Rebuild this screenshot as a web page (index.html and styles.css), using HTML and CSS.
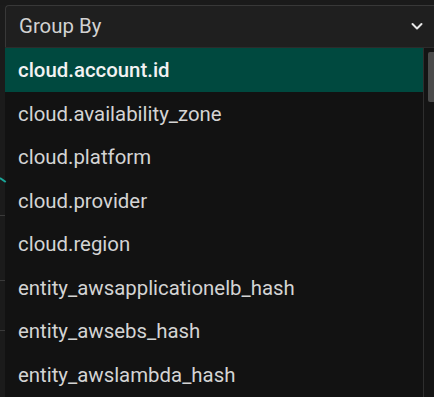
FILE: index.html
```html
<!DOCTYPE html>
<html lang="en">
<head>
<meta charset="UTF-8">
<title>Group By</title>
<link rel="stylesheet" href="styles.css">
</head>
<body>
  <div class="backdrop">
    <div class="chart-edge">
      <span class="grid-line"></span>
      <span class="trend"></span>
      <span class="grid-line"></span>
      <span class="grid-line"></span>
    </div>
    <div class="select-panel">
      <div class="select-box">
        <span class="select-label">Group By</span>
        <svg class="chevron" width="14" height="14" viewBox="0 0 14 14">
          <path d="M2.5 5 L7 9.5 L11.5 5" fill="none" stroke="#e6e6e6" stroke-width="2" stroke-linecap="round" stroke-linejoin="round"/>
        </svg>
      </div>
      <div class="menu">
        <ul class="options">
          <li class="option active">cloud.account.id</li>
          <li class="option">cloud.availability_zone</li>
          <li class="option">cloud.platform</li>
          <li class="option">cloud.provider</li>
          <li class="option">cloud.region</li>
          <li class="option">entity_awsapplicationelb_hash</li>
          <li class="option">entity_awsebs_hash</li>
          <li class="option">entity_awslambda_hash</li>
        </ul>
        <div class="scroll-track">
          <div class="scroll-thumb"></div>
        </div>
      </div>
    </div>
  </div>
</body>
</html>
```

FILE: styles.css
```css
html, body {
  margin: 0;
  height: 100%;
  overflow: hidden;
}

body {
  background: #2b2b2b;
  font-family: Roboto, "Liberation Sans", sans-serif;
  color: #d4d4d4;
}

.backdrop {
  display: flex;
  height: 100%;
  padding-top: 5px;
  box-sizing: border-box;
  background: #1a1a1a;
}

.chart-edge {
  width: 5px;
  flex-shrink: 0;
  position: relative;
  background: #1b1b1b;
}

.chart-edge .grid-line {
  position: absolute;
  left: 0;
  width: 5px;
  height: 1px;
  background: #3a3a3a;
}

.chart-edge .grid-line:nth-child(1) { top: 210px; }
.chart-edge .grid-line:nth-child(3) { top: 275px; }
.chart-edge .grid-line:nth-child(4) { top: 325px; }

.chart-edge .trend {
  position: absolute;
  left: 0;
  top: 172px;
  width: 7px;
  height: 2px;
  background: #1aa79a;
  transform: rotate(35deg);
  transform-origin: left center;
}

.select-panel {
  flex: 1;
  display: flex;
  flex-direction: column;
  min-width: 0;
}

.select-box {
  height: 42px;
  display: flex;
  align-items: center;
  justify-content: space-between;
  padding: 0 10px 2px 13px;
  box-sizing: border-box;
  background: #1f1f1f;
  border: 1px solid #383838;
  border-right: 0;
  border-bottom: 0;
  border-radius: 4px 0 0 0;
}

.select-label {
  font-size: 20.4px;
  color: #d2d2d2;
}

.chevron {
  display: block;
}

.menu {
  flex: 1;
  display: flex;
  background: #121212;
  border-top: 1px solid #2c2c2c;
  min-height: 0;
}

.options {
  list-style: none;
  margin: 0;
  padding: 0;
  flex: 1;
}

.option {
  height: 43.5px;
  display: flex;
  align-items: center;
  padding-left: 13px;
  font-size: 20.4px;
  color: #d4d4d4;
  white-space: nowrap;
}

.option.active {
  height: 44px;
  background: #00493f;
  color: #f2f2f2;
  font-weight: 500;
}

.scroll-track {
  width: 11px;
  flex-shrink: 0;
  border-left: 1px solid #2e2e2e;
  background: #141414;
  padding-top: 4px;
  padding-left: 4px;
  box-sizing: border-box;
}

.scroll-thumb {
  height: 50px;
  background: #4a4a4a;
  border-radius: 2px 0 0 2px;
}
```
